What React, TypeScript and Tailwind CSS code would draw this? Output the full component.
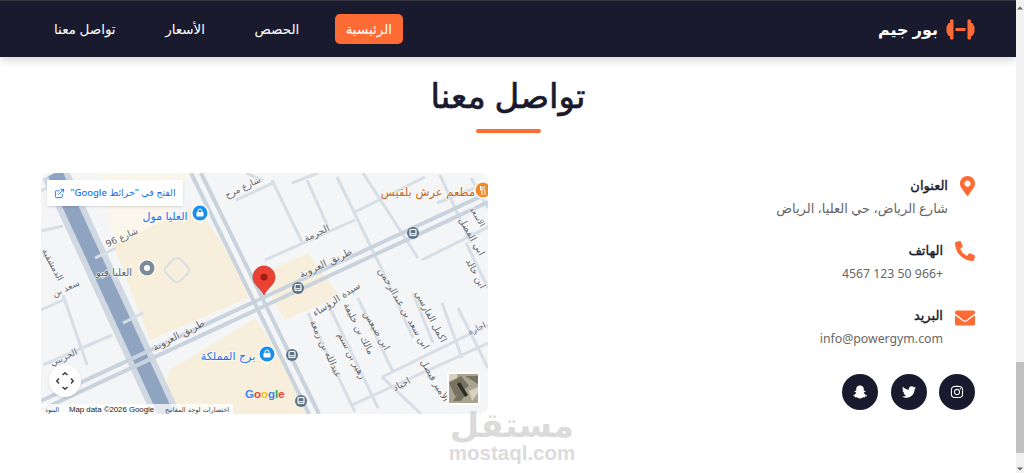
import { FaEnvelope, FaInstagram, FaMapMarkerAlt, FaPhoneAlt, FaSnapchatGhost, FaTwitter } from "react-icons/fa";
import { FiExternalLink } from "react-icons/fi";

const navItems = ["الرئيسية", "الحصص", "الأسعار", "تواصل معنا"];

const contactRows = [
  { icon: <FaMapMarkerAlt className="h-[20px] w-[15px]" />, title: "العنوان", body: "شارع الرياض، حي العليا، الرياض" },
  { icon: <FaPhoneAlt className="h-[20px] w-[20px]" />, title: "الهاتف", body: "4567 123 50 966+" },
  { icon: <FaEnvelope className="h-[20px] w-[20px]" />, title: "البريد", body: "info@powergym.com" },
];

// thin streets of the map, in map coordinates
const streets = [
  [231, 7, 261, 69], [266, 7, 287, 54], [296, 4, 345, 105], [322, 0, 377, 85], [399, 2, 430, 70],
  [267, 140, 314, 239], [289, 135, 337, 235], [317, 125, 352, 199], [401, 130, 421, 185], [417, 135, 447, 195],
  [341, 204, 380, 241], [251, 10, 277, 0], [314, 39, 384, 4], [224, 87, 314, 47], [381, 87, 447, 54],
  [341, 204, 447, 152], [311, 232, 447, 170], [0, 58, 22, 53], [0, 137, 22, 127], [22, 122, 46, 192],
  [2, 192, 71, 162], [0, 18, 20, 8], [195, 27, 232, 10], [205, 0, 222, 8], [372, 120, 392, 170],
  [345, 105, 372, 165], [396, 30, 447, 10], [425, 70, 447, 115], [430, 5, 447, 35],
];

type LabelProps = { x: number; y: number; r?: number; s?: number; c?: string; t: string };

const Label = ({ x, y, r = 0, s = 9.5, c = "#5f6368", t }: LabelProps) => (
  <text x={x} y={y} fontSize={s} fill={c} textAnchor="middle" transform={`rotate(${r} ${x} ${y})`} style={{ paintOrder: "stroke" }} stroke="#ffffff" strokeWidth={1.5} strokeOpacity={0.7}>
    {t}
  </text>
);

const Transit = ({ x, y }: { x: number; y: number }) => (
  <g>
    <circle cx={x} cy={y} r={6} fill="#5e7486" />
    <rect x={x - 3} y={y - 3.5} width={6} height={6} rx={1} fill="none" stroke="#ffffff" strokeWidth={1.2} />
    <rect x={x - 2.5} y={y + 0.2} width={5} height={1} fill="#ffffff" />
  </g>
);

const ShopPin = ({ x, y, c }: { x: number; y: number; c: string }) => (
  <g>
    <path d={`M${x - 9} ${y} a9 9 0 1 1 18 0 a9 9 0 0 1 -6 8 l-3 3 l-3 -3 a9 9 0 0 1 -6 -8z`} fill="#ffffff" />
    <circle cx={x} cy={y} r={7.5} fill={c} />
    <rect x={x - 3.5} y={y - 1} width={7} height={4.5} rx={0.8} fill="#ffffff" />
    <path d={`M${x - 2} ${y - 1} v-1 a2 2 0 0 1 4 0 v1`} fill="none" stroke="#ffffff" strokeWidth={1} />
  </g>
);

const GymMap = () => (
  <div dir="ltr" className="relative h-[241px] overflow-hidden rounded-lg bg-[#f4f5f7]">
    <svg viewBox="0 0 447 241" className="block h-full w-full font-['DejaVu_Sans',sans-serif]">
      <polygon points="59,0 149,0 124,47 72,72" fill="#faf6ec" />
      <polygon points="72,72 156,32 214,122 109,167" fill="#f7efdc" />
      <polygon points="229,97 267,80 299,123 244,147 231,127" fill="#f7efdc" />
      <polygon points="129,197 214,145 229,167 269,241 134,241 124,212" fill="#f7efdc" />
      {streets.map(([x1, y1, x2, y2], i) => (
        <line key={i} x1={x1} y1={y1} x2={x2} y2={y2} stroke="#d6dee6" strokeWidth={3} />
      ))}
      <line x1={14} y1={0} x2={125} y2={241} stroke="#d0d9e2" strokeWidth={27} />
      <line x1={14} y1={0} x2={125} y2={241} stroke="#8ea4c1" strokeWidth={15} />
      <line x1={54} y1={85} x2={75} y2={75} stroke="#d6dee6" strokeWidth={3} />
      <line x1={82} y1={150} x2={102} y2={140} stroke="#d6dee6" strokeWidth={3} />
      <line x1={100} y1={190} x2={120} y2={180} stroke="#d6dee6" strokeWidth={3} />
      <line x1={150} y1={0} x2={268} y2={241} stroke="#c9d3dd" strokeWidth={4} />
      <line x1={160} y1={0} x2={278} y2={241} stroke="#c9d3dd" strokeWidth={4} />
      <line x1={0} y1={228} x2={447} y2={20} stroke="#c9d3dd" strokeWidth={4} />
      <line x1={0} y1={237} x2={447} y2={29} stroke="#c9d3dd" strokeWidth={4} />
      <rect x={126} y={87} width={20} height={20} rx={5} fill="none" stroke="#d6dee6" strokeWidth={2} transform="rotate(45 136 97)" />

      <Label x={203} y={17} r={-26} s={9} t="شارع مرح" />
      <Label x={82} y={67} r={-25} s={9} t="شارع 96" />
      <Label x={73} y={103} s={10} t="العليا فيو" />
      <Label x={124} y={47} s={11} c="#1a73e8" t="العليا مول" />
      <Label x={26} y={118} r={-25} s={9} t="سعد بن" />
      <Label x={9} y={93} r={62} s={9} t="الدمشقية" />
      <Label x={277} y={63} r={-25} s={9.5} t="الحرمة" />
      <Label x={286} y={93} r={-25} s={10} t="طريق العروبة" />
      <Label x={139} y={165} r={-27} s={10} t="طريق العروبة" />
      <Label x={24} y={187} r={-25} s={9} t="الحزيبي" />
      <Label x={187} y={187} s={11} c="#1a73e8" t="برج المملكة" />
      <Label x={297} y={129} r={-33} t="سيدة الرؤساء" />
      <Label x={282} y={177} r={65} t="عبدالله بن زمعة" />
      <Label x={308} y={184} r={63} t="زهير بن سنم" />
      <Label x={315} y={157} r={63} t="مالك بن خليفة" />
      <Label x={333} y={159} r={60} t="ابن ضيعس" />
      <Label x={360} y={137} r={60} t="ابن سعد بن عبدالرحمن" />
      <Label x={387} y={145} r={62} t="اكمل الفارسي" />
      <Label x={391} y={209} r={60} t="الأمير فيصل" />
      <Label x={362} y={214} r={-28} t="اجياد" />
      <Label x={428} y={65} r={60} t="ابي الفضل" />
      <Label x={432} y={102} r={62} t="ابن خالد" />
      <Label x={434} y={45} r={60} s={8} t="الاسعد" />
      <Label x={437} y={158} r={-25} s={8.5} t="اجارة" />
      <Label x={387} y={23} s={11.5} c="#c5661a" t="مطعم عرش بلقيس" />

      <circle cx={442} cy={17} r={9} fill="#ffffff" />
      <circle cx={442} cy={17} r={7.5} fill="#f28b25" />
      <path d="M439.5 13v4M441 13v4M439.5 17h1.5v5M444 13c-1.5 1-1.5 4 0 5v4" fill="none" stroke="#ffffff" strokeWidth={1} />
      <ShopPin x={159} y={40} c="#1a8fe8" />
      <ShopPin x={226} y={181} c="#1a8fe8" />
      <circle cx={106} cy={95} r={8.5} fill="#ffffff" />
      <circle cx={106} cy={95} r={7.5} fill="#7b8b99" />
      <circle cx={106} cy={95} r={3} fill="#ffffff" />
      <Transit x={372} y={60} />
      <Transit x={257} y={115} />
      <Transit x={251} y={182} />
      <Transit x={260} y={228} />

      <path d="M223 93c-6 0-11 5-11 11 0 8 7 10 11 18 4-8 11-10 11-18 0-6-5-11-11-11z" fill="#ea4335" stroke="#c5221f" strokeWidth={0.6} />
      <circle cx={223} cy={104} r={3.5} fill="#a61d16" />

      <text x={204} y={225} fontSize={11.5} fontWeight={700} fontFamily="'Liberation Sans',sans-serif">
        <tspan fill="#4285f4">G</tspan>
        <tspan fill="#ea4335">o</tspan>
        <tspan fill="#fbbc05">o</tspan>
        <tspan fill="#4285f4">g</tspan>
        <tspan fill="#34a853">l</tspan>
        <tspan fill="#ea4335">e</tspan>
      </text>

      <rect x={406} y={199} width={33} height={33} rx={2} fill="#ffffff" />
      <rect x={408} y={201} width={29} height={29} fill="#a9a48f" />
      <path d="M408 210l12-7 8 10-14 10zM424 203h13v8zM412 228l8-12 6 4-6 8z" fill="#77725f" />
      <path d="M416 211l8 13 3-2-8-13z" fill="#2e2c26" />
      <path d="M428 218l9-4v6l-6 8zM408 201h8v4l-8 3z" fill="#d6d2bf" />

      <rect x={0} y={231} width={192} height={10} fill="#ffffff" fillOpacity={0.75} />
      <text x={11} y={239} fontSize={6.5} fill="#3c4043" textAnchor="middle">البنود</text>
      <text x={28} y={239} fontSize={7.8} fill="#202124" fontFamily="'Liberation Sans',sans-serif">Map data ©2026 Google</text>
      <text x={156} y={239} fontSize={6.5} fill="#3c4043" textAnchor="middle">اختصارات لوحة المفاتيح</text>
    </svg>

    <div className="absolute left-[6px] top-[7px] flex h-[26px] w-[136px] items-center justify-center gap-[5px] bg-white shadow-sm">
      <FiExternalLink className="h-[11px] w-[11px] text-[#1a73e8]" />
      <span dir="rtl" className="text-[9.5px] font-medium text-[#1a73e8]">الفتح في "خرائط Google"</span>
    </div>

    <div className="absolute bottom-[17px] left-[8px] flex h-[32px] w-[32px] items-center justify-center rounded-full bg-white shadow-sm">
      <svg viewBox="0 0 20 20" className="h-[20px] w-[20px]" fill="none" stroke="#444746" strokeWidth={1.6}>
        <path d="M7.5 4L10 1.8 12.5 4M7.5 16l2.5 2.2 2.5-2.2M4 7.5L1.8 10 4 12.5M16 7.5l2.2 2.5-2.2 2.5" />
      </svg>
    </div>
  </div>
);

export default function App() {
  return (
    <div className="relative flex h-[473px] w-[1024px] overflow-hidden bg-white font-['Noto_Sans','DejaVu_Sans',sans-serif]">
      <main dir="rtl" className="w-[1016px] shrink-0">
        <header className="flex h-[57px] items-center justify-between border-t border-[#33333f] bg-[#1a1a2e] px-10 shadow-[0_2px_10px_rgba(0,0,0,0.2)]">
          <div className="flex items-center gap-[8px] pr-[1px]">
            <svg viewBox="0 0 29 21" className="h-[21px] w-[29px]" fill="#ff6b35">
              <path d="M5 0.5h1.5a1 1 0 0 1 1 1v18a1 1 0 0 1-1 1H5a1 1 0 0 1-1-1v-2.5H2.5L0.5 13v-5l2-4H4V1.500a1 1 0 0 1 1-1z" />
              <path d="M24 0.5h-1.500a1 1 0 0 0-1 1v18a1 1 0 0 0 1 1H24a1 1 0 0 0 1-1v-2.500h1.500l2-4v-5l-2-4H25V1.500a1 1 0 0 0-1-1z" />
              <rect x={9.500} y={9} width={10} height={3} />
            </svg>
            <span className="text-[16px] font-bold text-white">بور جيم</span>
          </div>
          <nav className="flex items-center gap-[21.5px]">
            {navItems.map((item, i) => (
              <a
                key={item}
                className={`flex h-[30px] items-center justify-center rounded-[5px] text-[13.5px] text-white ${i === 0 ? "w-[68px] bg-[#ff6b35] text-[12.5px]" : "px-[14px]"}`}
              >
                {item}
              </a>
            ))}
          </nav>
        </header>

        <section className="px-[41px] pt-[14px]">
          <h2 className="text-center text-[34px] font-normal leading-[48px] text-[#1a1a2e] [-webkit-text-stroke:0.7px_#1a1a2e]">تواصل معنا</h2>
          <div className="mx-auto mt-[10px] h-[4px] w-[65px] rounded-full bg-[#ff6b35]" />

          <div className="mt-[40px] grid grid-cols-2 gap-10">
            <div className="flex flex-col">
              {contactRows.map((row, i) => (
                <div key={row.title} className="flex h-[65px] items-start gap-[12px] pt-[2px]">
                  <span className={`text-[#ff6b35] ${i === 2 ? "mt-[3px]" : "mt-[1px]"}`}>{row.icon}</span>
                  <div>
                    <h3 className="text-[13px] font-normal leading-[20px] text-[#1a1a2e] [-webkit-text-stroke:0.4px_#1a1a2e]">{row.title}</h3>
                    <p dir={i === 0 ? "rtl" : "ltr"} className={`text-right leading-[20px] text-[#666666] ${i === 0 ? "mt-[3px] text-[13px]" : "mt-[4px] text-[12.3px]"}`}>
                      {row.body}
                    </p>
                  </div>
                </div>
              ))}
              <div className="mt-[6px] flex gap-[12.5px]">
                {[FaInstagram, FaTwitter, FaSnapchatGhost].map((Icon, i) => (
                  <a key={i} className="flex h-[36px] w-[36px] items-center justify-center rounded-full bg-[#1a1a2e] text-white">
                    <Icon className="h-[14px] w-[14px]" />
                  </a>
                ))}
              </div>
            </div>
            <GymMap />
          </div>
        </section>
      </main>

      <div className="flex w-[8px] shrink-0 flex-col justify-between bg-[#f1f1f1] pb-[2px] pt-[6px]">
        <svg viewBox="0 0 8 4" className="h-[4px] w-[8px]" fill="#666666"><path d="M4 0.500L7 3.500H1z" /></svg>
        <div className="mt-auto mb-[14px] h-[91px] bg-[#c1c1c1]" />
        <svg viewBox="0 0 8 4" className="h-[4px] w-[8px]" fill="#666666"><path d="M4 3.500L7 0.500H1z" /></svg>
      </div>

      <div dir="rtl" className="pointer-events-none absolute bottom-[10px] left-[448px] flex w-[128px] flex-col items-center gap-[2px] text-[#c4c4c4]/60">
        <span className="text-[34px] font-bold leading-[34px]">مستقل</span>
        <span dir="ltr" className="font-['Liberation_Sans',sans-serif] text-[20.5px] font-bold leading-[20px]">mostaql.com</span>
      </div>
    </div>
  );
}
